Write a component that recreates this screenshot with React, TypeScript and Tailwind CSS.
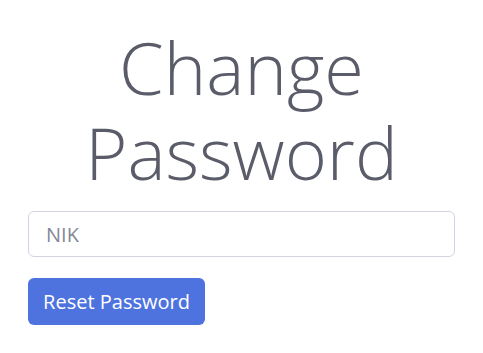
export default function App() {
  return (
    <div className="min-h-[353px] bg-white px-[28px] font-['Open_Sans',sans-serif] text-[#5a5c69]">
      <h1 className="pt-[25px] text-center text-[72px] font-[350] leading-[85px]">
        Change Password
      </h1>
      <form className="mt-[16px]">
        <input
          type="text"
          placeholder="NIK"
          className="block h-[46px] w-full rounded-[6px] border border-[#d1d3e2] px-[17px] text-[20px] text-[#6e707e] placeholder:text-[#858796] focus:outline-none"
        />
        <button
          type="button"
          className="mt-[21px] h-[47px] w-[177px] rounded-[6px] bg-[#4e73df] text-[20px] text-white"
        >
          Reset Password
        </button>
      </form>
    </div>
  );
}
